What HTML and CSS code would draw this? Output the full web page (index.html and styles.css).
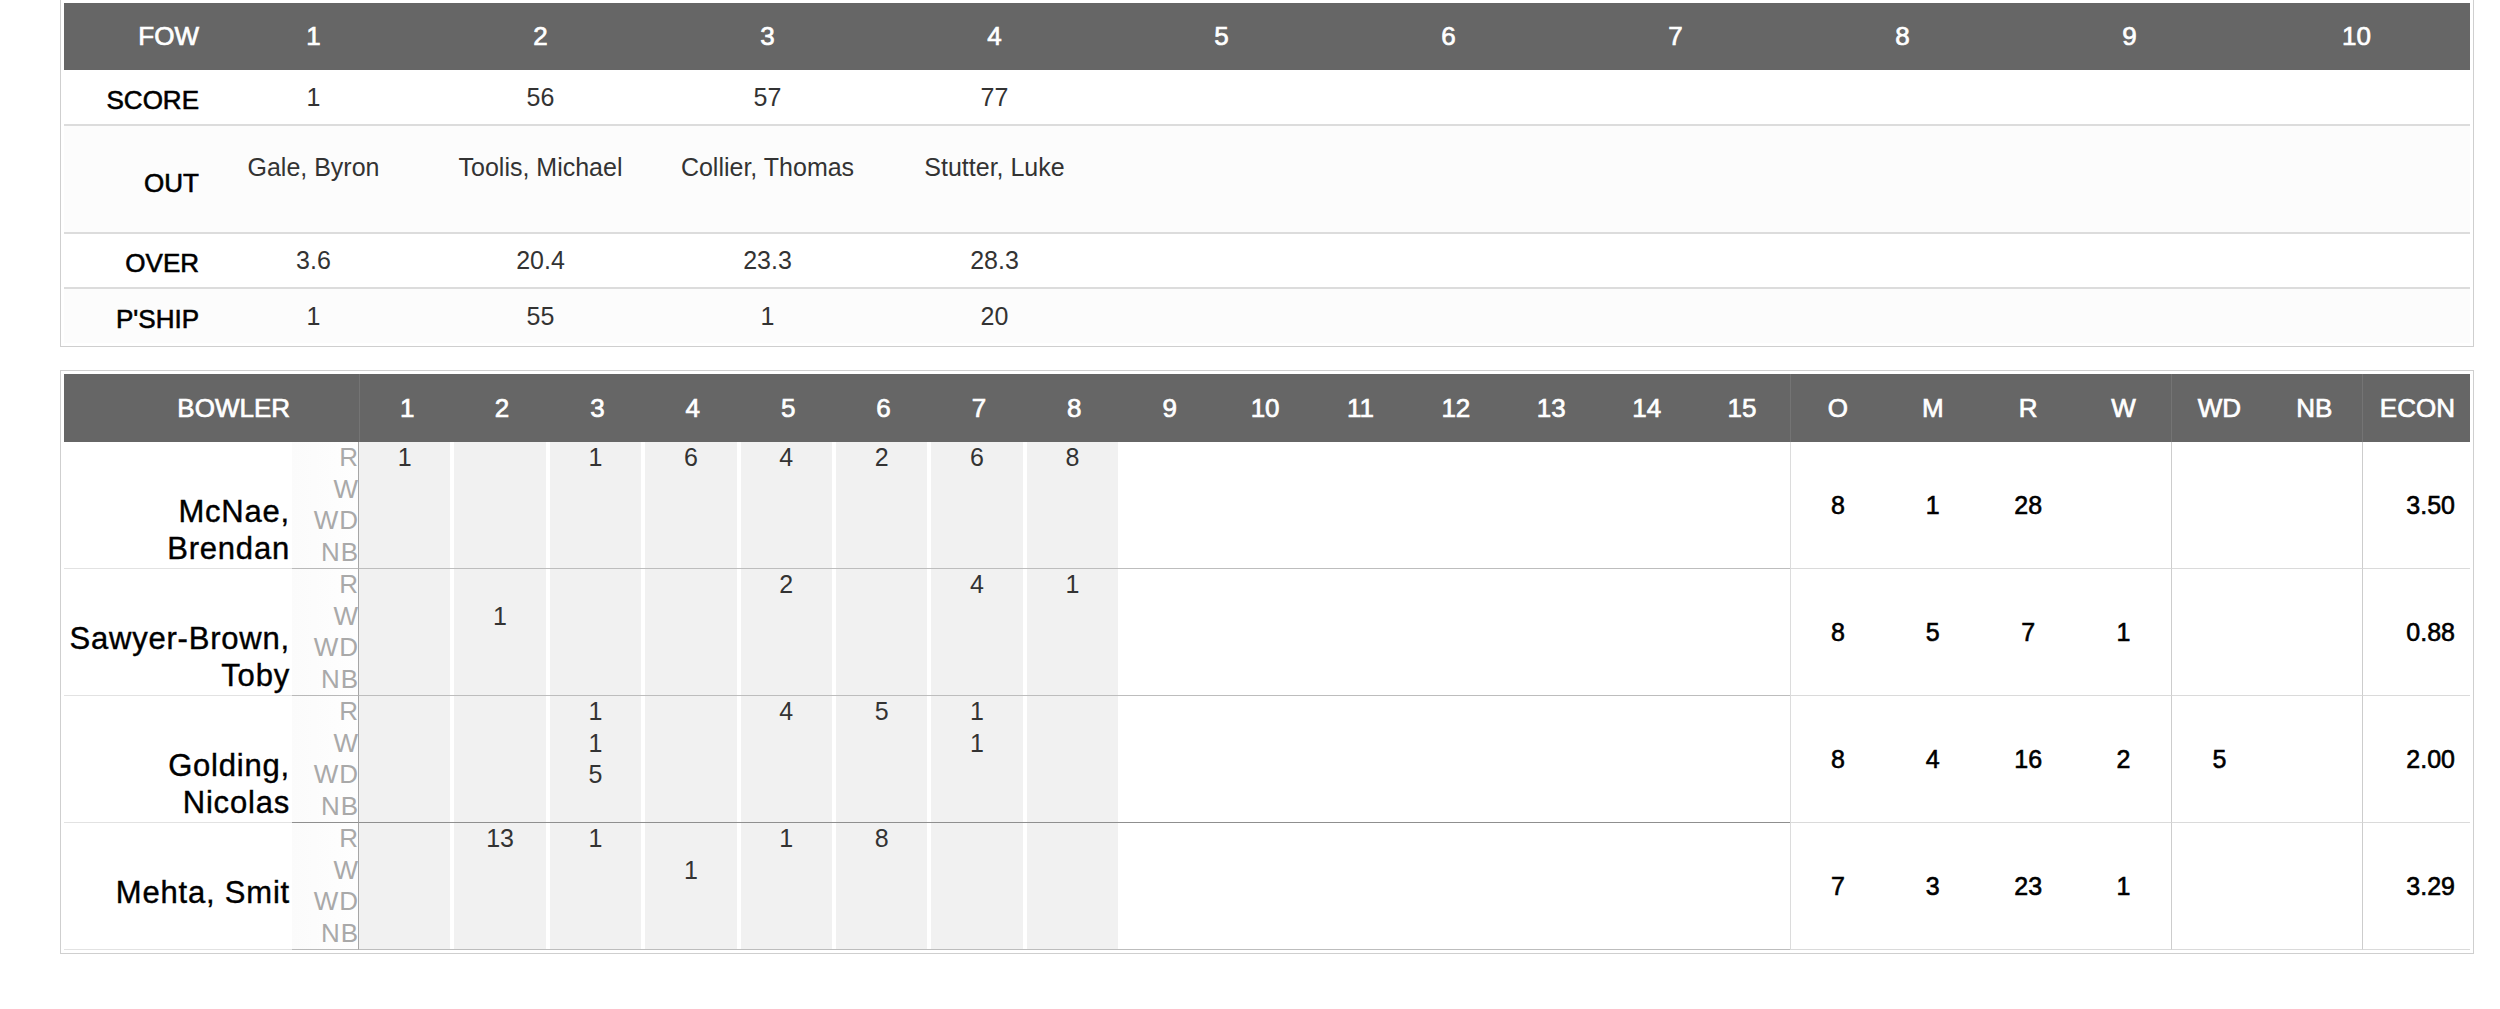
FILE: index.html
```html
<!DOCTYPE html>
<html lang="en">
<head>
<meta charset="utf-8">
<title>Scorecard</title>
<link rel="stylesheet" href="styles.css">
</head>
<body>
<section class="box fow">
  <div class="frow fhead">
    <div class="flbl">FOW</div><div>1</div><div>2</div><div>3</div><div>4</div><div>5</div><div>6</div><div>7</div><div>8</div><div>9</div><div>10</div>
  </div>
  <div class="frow fscore">
    <div class="flbl">SCORE</div><div>1</div><div>56</div><div>57</div><div>77</div><div></div><div></div><div></div><div></div><div></div><div></div>
  </div>
  <div class="frow fout">
    <div class="flbl">OUT</div><div>Gale, Byron</div><div>Toolis, Michael</div><div>Collier, Thomas</div><div>Stutter, Luke</div><div></div><div></div><div></div><div></div><div></div><div></div>
  </div>
  <div class="frow fover">
    <div class="flbl">OVER</div><div>3.6</div><div>20.4</div><div>23.3</div><div>28.3</div><div></div><div></div><div></div><div></div><div></div><div></div>
  </div>
  <div class="frow fship">
    <div class="flbl">P'SHIP</div><div>1</div><div>55</div><div>1</div><div>20</div><div></div><div></div><div></div><div></div><div></div><div></div>
  </div>
</section>

<section class="box bowl">
  <div class="brow bhead">
    <div class="bh-name">BOWLER</div>
    <div class="sep">1</div><div>2</div><div>3</div><div>4</div><div>5</div><div>6</div><div>7</div><div>8</div><div>9</div><div>10</div><div>11</div><div>12</div><div>13</div><div>14</div><div>15</div>
    <div class="sep">O</div><div>M</div><div>R</div><div>W</div>
    <div class="sep">WD</div><div>NB</div>
    <div class="sep econ">ECON</div>
  </div>

  <div class="brow bbody">
    <div class="bname">McNae,<br>Brendan</div>
    <div class="blabels"><span>R</span><span>W</span><span>WD</span><span>NB</span></div>
    <div class="ov g"><div class="fill"><span>1</span><span></span><span></span><span></span></div></div>
    <div class="ov g"><div class="fill"><span></span><span></span><span></span><span></span></div></div>
    <div class="ov g"><div class="fill"><span>1</span><span></span><span></span><span></span></div></div>
    <div class="ov g"><div class="fill"><span>6</span><span></span><span></span><span></span></div></div>
    <div class="ov g"><div class="fill"><span>4</span><span></span><span></span><span></span></div></div>
    <div class="ov g"><div class="fill"><span>2</span><span></span><span></span><span></span></div></div>
    <div class="ov g"><div class="fill"><span>6</span><span></span><span></span><span></span></div></div>
    <div class="ov g"><div class="fill"><span>8</span><span></span><span></span><span></span></div></div>
    <div class="ov"></div><div class="ov"></div><div class="ov"></div><div class="ov"></div><div class="ov"></div><div class="ov"></div><div class="ov"></div>
    <div class="st first">8</div><div class="st">1</div><div class="st">28</div><div class="st"></div>
    <div class="st sep"></div><div class="st"></div>
    <div class="st sep econ">3.50</div>
  </div>

  <div class="brow bbody">
    <div class="bname">Sawyer-Brown,<br>Toby</div>
    <div class="blabels"><span>R</span><span>W</span><span>WD</span><span>NB</span></div>
    <div class="ov g"><div class="fill"><span></span><span></span><span></span><span></span></div></div>
    <div class="ov g"><div class="fill"><span></span><span>1</span><span></span><span></span></div></div>
    <div class="ov g"><div class="fill"><span></span><span></span><span></span><span></span></div></div>
    <div class="ov g"><div class="fill"><span></span><span></span><span></span><span></span></div></div>
    <div class="ov g"><div class="fill"><span>2</span><span></span><span></span><span></span></div></div>
    <div class="ov g"><div class="fill"><span></span><span></span><span></span><span></span></div></div>
    <div class="ov g"><div class="fill"><span>4</span><span></span><span></span><span></span></div></div>
    <div class="ov g"><div class="fill"><span>1</span><span></span><span></span><span></span></div></div>
    <div class="ov"></div><div class="ov"></div><div class="ov"></div><div class="ov"></div><div class="ov"></div><div class="ov"></div><div class="ov"></div>
    <div class="st first">8</div><div class="st">5</div><div class="st">7</div><div class="st">1</div>
    <div class="st sep"></div><div class="st"></div>
    <div class="st sep econ">0.88</div>
  </div>

  <div class="brow bbody dark">
    <div class="bname">Golding,<br>Nicolas</div>
    <div class="blabels"><span>R</span><span>W</span><span>WD</span><span>NB</span></div>
    <div class="ov g"><div class="fill"><span></span><span></span><span></span><span></span></div></div>
    <div class="ov g"><div class="fill"><span></span><span></span><span></span><span></span></div></div>
    <div class="ov g"><div class="fill"><span>1</span><span>1</span><span>5</span><span></span></div></div>
    <div class="ov g"><div class="fill"><span></span><span></span><span></span><span></span></div></div>
    <div class="ov g"><div class="fill"><span>4</span><span></span><span></span><span></span></div></div>
    <div class="ov g"><div class="fill"><span>5</span><span></span><span></span><span></span></div></div>
    <div class="ov g"><div class="fill"><span>1</span><span>1</span><span></span><span></span></div></div>
    <div class="ov g"><div class="fill"><span></span><span></span><span></span><span></span></div></div>
    <div class="ov"></div><div class="ov"></div><div class="ov"></div><div class="ov"></div><div class="ov"></div><div class="ov"></div><div class="ov"></div>
    <div class="st first">8</div><div class="st">4</div><div class="st">16</div><div class="st">2</div>
    <div class="st sep">5</div><div class="st"></div>
    <div class="st sep econ">2.00</div>
  </div>

  <div class="brow bbody">
    <div class="bname">Mehta, Smit</div>
    <div class="blabels"><span>R</span><span>W</span><span>WD</span><span>NB</span></div>
    <div class="ov g"><div class="fill"><span></span><span></span><span></span><span></span></div></div>
    <div class="ov g"><div class="fill"><span>13</span><span></span><span></span><span></span></div></div>
    <div class="ov g"><div class="fill"><span>1</span><span></span><span></span><span></span></div></div>
    <div class="ov g"><div class="fill"><span></span><span>1</span><span></span><span></span></div></div>
    <div class="ov g"><div class="fill"><span>1</span><span></span><span></span><span></span></div></div>
    <div class="ov g"><div class="fill"><span>8</span><span></span><span></span><span></span></div></div>
    <div class="ov g"><div class="fill"><span></span><span></span><span></span><span></span></div></div>
    <div class="ov g"><div class="fill"><span></span><span></span><span></span><span></span></div></div>
    <div class="ov"></div><div class="ov"></div><div class="ov"></div><div class="ov"></div><div class="ov"></div><div class="ov"></div><div class="ov"></div>
    <div class="st first">7</div><div class="st">3</div><div class="st">23</div><div class="st">1</div>
    <div class="st sep"></div><div class="st"></div>
    <div class="st sep econ">3.29</div>
  </div>
</section>
</body>
</html>
```
FILE: styles.css
```css
body { margin: 0; background: #fff; font-family: "Liberation Sans", Arial, sans-serif; }
.box { margin: 0 26px 0 60px; border: 1px solid #cfcfcf; padding: 3px; width: 2406px; }
.fow { margin-top: -1px; }
.bowl { margin-top: 23px; }

/* fall of wickets */
.frow { display: grid; grid-template-columns: 136px repeat(10, 1fr); }
.frow > div { display: flex; align-items: center; justify-content: center; font-size: 25px; color: #333; }
.frow > .flbl { justify-content: flex-end; padding-right: 1px; font-size: 26px; color: #000; -webkit-text-stroke: 0.6px #000; }
.fhead { height: 67px; background: #666; }
.fhead > div, .fhead > .flbl { color: #fff; font-size: 26px; -webkit-text-stroke: 0.7px #fff; }
.fscore { height: 54px; border-bottom: 2px solid #dcdcdc; }
.fout { height: 106px; border-bottom: 2px solid #dcdcdc; background: #fcfcfc; }
.fout > div { align-items: flex-start; padding-top: 27px; }
.fout > .flbl { align-items: center; padding-top: 8px; }
.fover { height: 53px; border-bottom: 2px solid #dcdcdc; }
.fship { height: 54px; background: #fcfcfc; }
.fscore > .flbl, .fover > .flbl, .fship > .flbl { padding-top: 6px; }

/* bowling */
.brow { display: grid; grid-template-columns: 228px 67px repeat(21, 1fr) 108px; }
.bhead { height: 68px; background: #666; }
.bhead > div { display: flex; align-items: center; justify-content: center; color: #fff; font-size: 26px; -webkit-text-stroke: 0.7px #fff; }
.bhead > .bh-name { grid-column: span 2; justify-content: flex-end; padding-right: 69px; }
.bhead > .sep { border-left: 1px solid #747474; }
.bhead > .econ { justify-content: flex-end; padding-right: 15px; }

.bbody { height: 127px; }
.bbody > div { box-sizing: border-box; }
.bname { text-align: right; padding: 51px 2px 0 0;
  font-size: 31px; line-height: 37px; letter-spacing: 0.8px; color: #000; -webkit-text-stroke: 0.4px #000;
  border-bottom: 1px solid #e2e2e2; }
.blabels { display: grid; grid-template-rows: repeat(4, 1fr); border-bottom: 1px solid #b9b9b9; border-right: 1px solid #a6a6a6;
  background: linear-gradient(to right, #fbfbfb, #fefefe); }
.blabels > span { text-align: right; font-size: 26px; line-height: 31.5px; letter-spacing: 1px; color: #a9a9a9; margin-right: -1px; }
.ov { border-bottom: 1px solid #bdbdbd; display: flex; }
.bbody.dark > .ov, .bbody.dark > .blabels { border-bottom-color: #8f8f8f; }
.ov > .fill { flex: 1; margin-right: 4px; display: grid; grid-template-rows: repeat(4, 1fr); }
.ov.g > .fill { background: #f1f1f1; }
.fill > span { text-align: center; font-size: 25px; line-height: 31.5px; color: #333; }
.st { display: flex; align-items: center; justify-content: center; font-size: 25px; color: #000; -webkit-text-stroke: 0.6px #000;
  border-bottom: 1px solid #dadada; }
.st.first { border-left: 1px solid #dcdcdc; }
.st.sep { border-left: 1px solid #cdcdcd; }
.st.econ { justify-content: flex-end; padding-right: 15px; }
```
